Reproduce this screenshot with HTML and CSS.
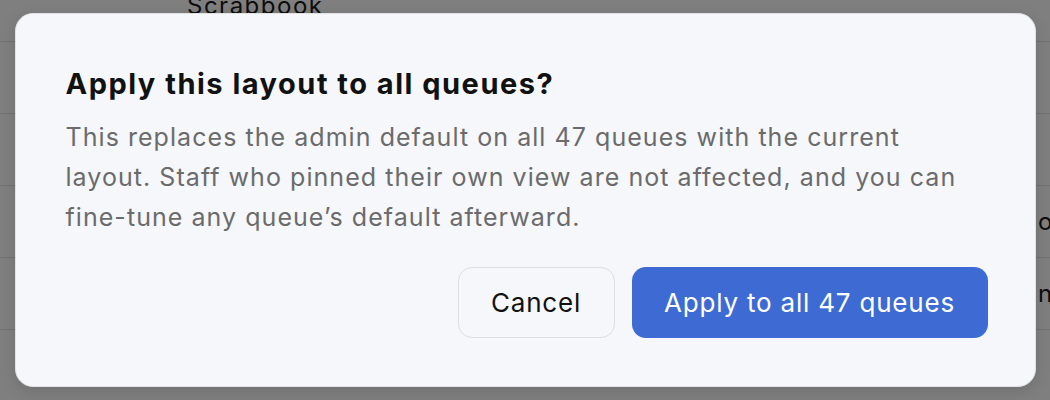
FILE: index.html
```html
<!DOCTYPE html>
<html lang="en">

<head>
    <meta charset="UTF-8">
    <meta name="viewport" content="width=device-width, initial-scale=1.0">
    <title>Apply layout</title>
    <link rel="stylesheet" href="styles.css">
</head>

<body>
    <!-- 背后的队列表格 -->
    <div class="page">
        <div class="row"><span class="name">Scrabbook</span><span class="last"></span></div>
        <div class="row"><span class="name">Billing</span><span class="last"></span></div>
        <div class="row"><span class="name">Returns</span><span class="last"></span></div>
        <div class="row"><span class="name">Shipping</span><span class="last">on</span></div>
        <div class="row"><span class="name">Warranty</span><span class="last">none</span></div>
        <div class="row"><span class="name">Wholesale</span><span class="last"></span></div>
    </div>

    <!-- 遮罩 + 对话框 -->
    <div class="overlay">
        <div class="dialog">
            <h2 class="title">Apply this layout to all queues?</h2>
            <p class="desc">This replaces the admin default on all 47 queues with the current layout. Staff who pinned their own view are not affected, and you can fine-tune any queue’s default afterward.</p>
            <div class="actions">
                <button class="btn cancel">Cancel</button>
                <button class="btn primary">Apply to all 47 queues</button>
            </div>
        </div>
    </div>
</body>

</html>
```

FILE: styles.css
```css
* {
    margin: 0;
    padding: 0;
    box-sizing: border-box;
}

html,
body {
    width: 100%;
    height: 100%;
    overflow: hidden;
}

body {
    position: relative;
    background: #fff;
    font-family: Inter, "Liberation Sans", sans-serif;
    color: #111;
}

.page {
    display: flex;
    flex-direction: column;
    margin-top: -30px;
}

.row {
    display: flex;
    height: 72px;
    align-items: center;
    border-bottom: 1px solid #e4e4e4;
    font-size: 24px;
    letter-spacing: 1.5px;
    color: #1a1a1a;
}

.row .name {
    margin-left: 187px;
    flex: 1;
}

.row .last {
    width: 12px;
    white-space: nowrap;
    overflow: hidden;
}

.overlay {
    position: absolute;
    inset: 0;
    display: flex;
    align-items: center;
    justify-content: center;
    background: rgba(0, 0, 0, 0.5);
}

.dialog {
    width: 1021px;
    height: 374px;
    padding: 50px 47px 48px 50px;
    background: #f5f7fa;
    border: 1px solid #e2e2e2;
    border-radius: 18px;
    box-shadow: 0 4px 16px rgba(0, 0, 0, 0.12);
    display: flex;
    flex-direction: column;
}

.title {
    font-size: 29px;
    font-weight: 700;
    line-height: 40px;
    letter-spacing: 1.5px;
    color: #111;
}

.desc {
    margin-top: 13px;
    font-size: 25px;
    line-height: 40px;
    letter-spacing: 1.05px;
    color: #6b6b6b;
    max-width: 905px;
}

.actions {
    margin-top: auto;
    display: flex;
    justify-content: flex-end;
    gap: 17px;
}

.btn {
    height: 71px;
    border-radius: 14px;
    font-family: Inter, "Liberation Sans", sans-serif;
    font-size: 26px;
    font-weight: 400;
    letter-spacing: 0.8px;
    cursor: pointer;
}

.cancel {
    width: 157px;
    background: #f5f7fa;
    border: 1.5px solid #dedede;
    color: #111;
}

.primary {
    width: 356px;
    background: #3d6bd3;
    border: none;
    color: #fff;
}
```
